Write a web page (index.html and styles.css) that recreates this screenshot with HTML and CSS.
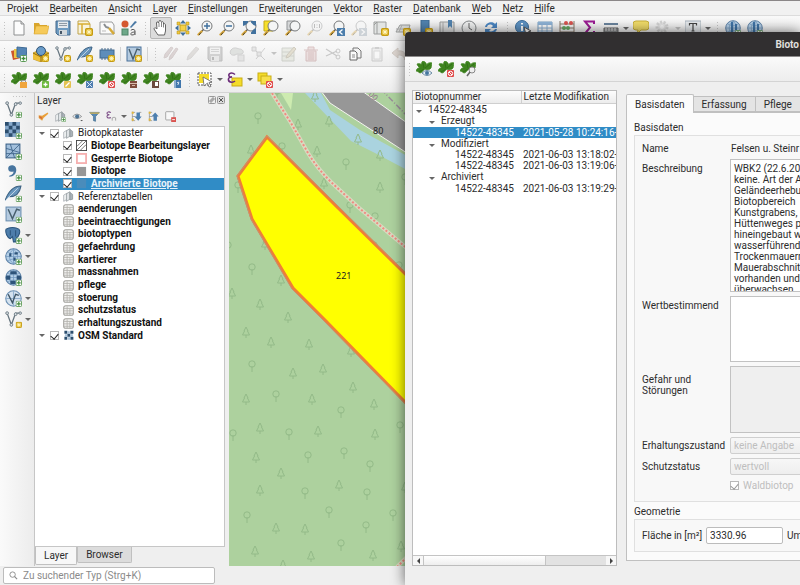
FILE: index.html
```html
<!DOCTYPE html>
<html lang="de">
<head>
<meta charset="utf-8">
<title>Biotopkataster</title>
<link rel="stylesheet" href="styles.css">
</head>
<body>
<svg class="defs" aria-hidden="true">
  <defs>
    <symbol id="b-plus" viewBox="0 0 7 7"><rect x=".5" y=".5" width="6" height="6" rx="1" fill="#fff" stroke="#5b9a55"/><path d="M3.500 1.500v4M1.500 3.500h4" stroke="#3f8a3a" stroke-width="1.300"/></symbol>
    <symbol id="b-star" viewBox="0 0 7 7"><rect x=".5" y=".5" width="6" height="6" rx="1" fill="#e8c33c" stroke="#c49a12"/><path d="M3.500 1.300v4.400M1.300 3.500h4.400M2 2l3 3M5 2l-3 3" stroke="#fff7c8" stroke-width=".8"/></symbol>
    <symbol id="b-no" viewBox="0 0 7 7"><rect width="7" height="7" rx="1" fill="#e04848"/><circle cx="3.500" cy="3.500" r="2.200" fill="none" stroke="#fff"/><path d="M2 2l3 3" stroke="#fff"/></symbol>
    <symbol id="leaf" viewBox="0 0 16 16"><path d="M8 8C5 5 5 1 7 0c3 1 4 3 3 5 1-3 4-4 6-3-1 2 0 5-2 6-2 1-4 1-5 0-2 1-3 4-5 4-2-1-2-2-4-2 1-3 3-4 6-3C4 7 2 6 1 3c3-1 5 0 6 3z" fill="#3f8420" stroke="#3f8420" stroke-width=".8"/><path d="M8 8L3 11M9 7l5-4M8 7L7 2" stroke="#2d6814" stroke-width=".7" fill="none"/></symbol>
    <symbol id="lens" viewBox="0 0 16 16"><circle cx="10" cy="6" r="5" fill="#f4f5f5" stroke="#77797a"/><path d="M6.500 9.500L4 12" stroke="#555" stroke-width="1.500"/><path d="M4.500 11.500L1.500 14.500" stroke="#d8a83e" stroke-width="2.400" stroke-linecap="round"/><path d="M4 12.500L2 15" stroke="#222" stroke-width=".8"/></symbol>
    <symbol id="vec" viewBox="0 0 16 16"><path d="M2 2l4 11 4-11h4" fill="none" stroke="#65747e" stroke-width="1.200"/><g fill="#dfe5e8" stroke="#65747e" stroke-width=".8"><circle cx="2" cy="2" r="1.300"/><circle cx="6" cy="13" r="1.300"/><circle cx="10" cy="3" r="1.300"/><circle cx="14.300" cy="2" r="1.200"/></g></symbol>
    <symbol id="feather" viewBox="0 0 16 16"><path d="M0 15C3 6 8 1 15 1c-1 6-5 10-11 10" fill="#6795bd" stroke="#3d6283"/><path d="M0 15L12 3" stroke="#d5e3ee" stroke-width=".8"/></symbol>
    <symbol id="globe" viewBox="0 0 16 16"><circle cx="8" cy="8" r="7.300" fill="#b4cfe7" stroke="#5f83a8"/><path d="M1 8h14M8 1v14M3 4c3 2 7 2 10 0M3 12c3-2 7-2 10 0M8 1C3 5 3 11 8 15M8 1c5 4 5 10 0 14" fill="none" stroke="#7299bf" stroke-width=".7"/></symbol>
    <symbol id="doc" viewBox="0 0 16 16"><path d="M3 1h7l3 3v11H3z" fill="#fcfcfc" stroke="#8d8f90"/><path d="M10 1v3h3" fill="#ddd" stroke="#8d8f90"/></symbol>
    <symbol id="disk" viewBox="0 0 16 16"><path d="M1 1h14v14H3l-2-2z" fill="#6d9ac0" stroke="#44698b"/><path d="M3 1.500h10V8H3z" fill="#e4e9ed"/><path d="M4 3.500h8M4 5.500h8" stroke="#8e9aa5"/><path d="M4 10h8v5H4z" fill="#d2d8dc"/><path d="M5 11h2v3H5z" fill="#456"/></symbol>
    <symbol id="pencil" viewBox="0 0 16 16"><path d="M2 14l1-4L11 1l3 2L6 12z" fill="#b9b3ae" stroke="#99938f" stroke-width=".8"/></symbol>
    <symbol id="grp" viewBox="0 0 16 16"><path d="M1 6l5-3v9l-5 3z" fill="#f1f3f4" stroke="#9aa1a6"/><path d="M5 4l5-3v11l-5 3z" fill="#dfe3e6" stroke="#8b9398"/><path d="M10 2l4 3v7l-4 1z" fill="#aab3b9" stroke="#858c90"/></symbol>
    <symbol id="tbl" viewBox="0 0 16 16"><rect x="1" y="1" width="14" height="14" rx="3" fill="#f2f2f0" stroke="#a3a29e" stroke-width="1.500"/><path d="M1 5h14M1 8.500h14M1 12h14M6 2v13M10 5v10" stroke="#b2b1ad" stroke-width="1.200"/></symbol>
    <symbol id="check" viewBox="0 0 16 16"><rect width="16" height="16" fill="#2c4e6e"/><path d="M4 0h4v4H4zM12 0h4v4h-4zM0 4h4v4H0zM8 4h4v4H8zM4 8h4v4H4zM12 8h4v4h-4zM0 12h4v4H0zM8 12h4v4H8z" fill="#86a9cb"/></symbol>
    <symbol id="osm" viewBox="0 0 16 16"><path d="M0 0h5v5H0zM10 0h5v5h-5zM5 5h5v5H5zM0 10h5v5H0zM10 10h5v5h-5z" fill="#2c4e6e"/><path d="M5 1h4v4H5zM1 6h4v4H1zM10 6h4v4h-4zM6 11h4v4H6z" fill="#a9c3dc"/></symbol>
    <symbol id="pine" viewBox="0 0 8 12"><path d="M4 1L6 5H5.500L7.500 9H.5L2.500 5H2zM4 9v3" fill="none" stroke="#93ba88"/></symbol>
    <symbol id="oak" viewBox="0 0 8 12"><circle cx="4" cy="4" r="3.200" fill="none" stroke="#93ba88"/><path d="M4 6v6" stroke="#93ba88"/></symbol>
  </defs>
</svg>

<nav class="menu">
  <a href="#">Pro<u>j</u>ekt</a><a href="#"><u>B</u>earbeiten</a><a href="#"><u>A</u>nsicht</a><a href="#"><u>L</u>ayer</a><a href="#"><u>E</u>instellungen</a><a href="#">Er<u>w</u>eiterungen</a><a href="#"><u>V</u>ektor</a><a href="#"><u>R</u>aster</a><a href="#"><u>D</u>atenbank</a><a href="#"><u>W</u>eb</a><a href="#"><u>N</u>etz</a><a href="#"><u>H</u>ilfe</a>
</nav>

<div class="bar">
  <i class="grip lead"></i>
  <button aria-label="Neu"><svg><use href="#doc"/></svg></button>
  <button aria-label="Öffnen"><svg viewBox="0 0 16 16"><path d="M1 14V3h5l1 2h7v9z" fill="#d9a52c"/><path d="M1 14L3 6h13l-2 8z" fill="#f6ca5a" stroke="#d9a52c" stroke-width=".6"/></svg></button>
  <button aria-label="Speichern"><svg><use href="#disk"/></svg></button>
  <button aria-label="Neues Layout"><svg viewBox="0 0 16 16"><path d="M1 1h10l2 3v10H1z" fill="#f8f3dc" stroke="#bfa34a"/><path d="M1 4h12M5 4v10" stroke="#d8ae33" stroke-width="1.500"/><use href="#b-star" x="8" y="8" width="8" height="8"/></svg></button>
  <button aria-label="Layouts"><svg viewBox="0 0 16 16"><path d="M1 2h12l2 3v9H1z" fill="#fafafa" stroke="#9a9c9d"/><path d="M5 4l2 3 3 1" fill="none" stroke="#8a8e91" stroke-width="2"/><path d="M10 8l5 6" stroke="#d5aa38" stroke-width="2.500"/><path d="M3 11h4" stroke="#bbb"/></svg></button>
  <button aria-label="Stile"><svg viewBox="0 0 16 16"><circle cx="4" cy="4" r="3.500" fill="#d4572f"/><path d="M9 7l5-6 2 1-6 6z" fill="#4b7aa5"/><rect x="1" y="9" width="6" height="6" fill="#6ea889" stroke="#4e8468"/><path d="M14 15V11c0-2-4-2-4-.5M14 12c-5 0-5 3-3 3q2 0 3-1.500" fill="none" stroke="#555"/></svg></button>
  <i class="grip"></i>
  <button class="on" aria-label="Verschieben"><svg viewBox="0 0 16 16"><path d="M5 15L1 9c0-1 1-2 3 0L3.500 3c0-1.500 1.500-1.500 2 0L6 1.500c0-1.500 2-1.500 2 0l.5 1c0-1.500 2-1 2 .5v1c1-1 2 0 2 1V11l-1 4z" fill="#fff" stroke="#555" stroke-width=".9"/><path d="M6 3v4M8.500 3v4M10.500 4v3.500" stroke="#666" stroke-width=".8"/></svg></button>
  <button aria-label="Auf Auswahl"><svg viewBox="0 0 16 16"><rect x="5" y="5" width="6" height="6" fill="#f5d24b" stroke="#c19f1e"/><path d="M8 0l3 3.500H5zM8 16l3-3.500H5zM0 8l3.500-3v6zM16 8l-3.500-3v6z" fill="#41719e"/><path d="M2 2h3v3H2zM11 2h3v3h-3zM2 11h3v3H2zM11 11h3v3h-3z" fill="#f0c83c" stroke="#b18d14" stroke-width=".5"/></svg></button>
  <button aria-label="Hineinzoomen"><svg viewBox="0 0 16 16"><use href="#lens"/><path d="M10 3v6M7 6h6" stroke="#41719e" stroke-width="1.500"/></svg></button>
  <button aria-label="Hinauszoomen"><svg viewBox="0 0 16 16"><use href="#lens"/><path d="M7 6h6" stroke="#41719e" stroke-width="1.500"/></svg></button>
  <button aria-label="Voll zoomen"><svg viewBox="0 0 16 16"><use href="#lens"/><path d="M2 1h5v1.500L4.500 5 2 6zM15 1h-5v1.500L12.500 5 15 6zM15 14h-5v-1.500l2.500-3L15 8z" fill="#41719e"/></svg></button>
  <button aria-label="Zur Auswahl zoomen"><svg viewBox="0 0 16 16"><path d="M1 1h9v10H1z" fill="#f7e02b" stroke="#c4a918"/><use href="#lens"/></svg></button>
  <button aria-label="Auf Layer zoomen"><svg viewBox="0 0 16 16"><path d="M2 1h8v9H2z" fill="#d5d7d8" stroke="#919496"/><use href="#lens"/></svg></button>
  <button class="off" aria-label="Auf native Auflösung"><svg viewBox="0 0 16 16"><use href="#lens"/><path d="M7.500 4v4M10 4.500v.8M10 7v.8M12.500 4v4" stroke="#555"/></svg></button>
  <button aria-label="Zoom zurück"><svg viewBox="0 0 16 16"><use href="#lens"/><rect x="8" y="8" width="8" height="8" fill="#4c7eac"/><path d="M13.500 9.500L10.500 12l3 2.500" fill="none" stroke="#fff" stroke-width="1.300"/></svg></button>
  <button class="off" aria-label="Zoom vor"><svg viewBox="0 0 16 16"><use href="#lens"/><rect x="8" y="8" width="8" height="8" fill="#8a9aa8"/><path d="M10.500 9.500l3 2.500-3 2.500" fill="none" stroke="#fff" stroke-width="1.300"/></svg></button>
  <button aria-label="Neue Kartenansicht"><svg viewBox="0 0 16 16"><path d="M1 2h12v12H1z" fill="#e2e4e3" stroke="#9b9d9c"/><path d="M4 2v12M1 5l3-3" stroke="#9b9d9c"/><use href="#b-star" x="8" y="8" width="8" height="8"/></svg></button>
  <button aria-label="Neue 3D-Ansicht"><svg viewBox="0 0 16 16"><path d="M1 12L5 5h10l-2 7z" fill="#d9dbd9" stroke="#9b9d9c"/><path d="M4 12l3-7M1 9h13" stroke="#aaa"/><use href="#b-star" x="8" y="8" width="8" height="8"/></svg></button>
  <button aria-label="Neues Lesezeichen"><svg viewBox="0 0 16 16"><path d="M4 0h8v14l-4-3-4 3z" fill="#5284b0" stroke="#3f6a92"/><use href="#b-star" x="8" y="8" width="8" height="8"/></svg></button>
  <button aria-label="Lesezeichen"><svg viewBox="0 0 16 16"><path d="M1 2h14v12H1z" fill="#e2e3e3" stroke="#9b9d9c"/><path d="M4 2v12" stroke="#aaa"/><path d="M9 0h4v8l-2-2-2 2z" fill="#5284b0"/></svg></button>
  <button aria-label="Zeitsteuerung"><svg viewBox="0 0 16 16"><circle cx="8" cy="8" r="7" fill="#f1f2f2" stroke="#84888a"/><path d="M8 3v5l3 2" fill="none" stroke="#666"/></svg></button>
  <button aria-label="Neu laden"><svg viewBox="0 0 16 16"><path d="M2 7c1-5 8-6 10-3l2-2v6H8l2-2C8 4 5 4 4 7zM14 9c-1 5-8 6-10 3l-2 2V9h6l-2 2c2 1 5 0 6-2z" fill="#4b87c4"/></svg></button>
  <i class="grip"></i>
  <button aria-label="Objekte abfragen"><svg viewBox="0 0 16 16"><circle cx="7" cy="7" r="6.500" fill="#5e93c4" stroke="#3e6f9c"/><path d="M7 6v5M7 3v1.500" stroke="#fff" stroke-width="2"/><path d="M9 7l7 4-3 1-2 3z" fill="#fff" stroke="#555"/></svg></button>
  <button aria-label="Attributtabelle"><svg viewBox="0 0 16 16"><path d="M1 2h14v13H1z" fill="#fff" stroke="#7ba0c2"/><path d="M1 2h14v3H1z" fill="#8fb4d8"/><path d="M1 8h14M1 11h14M5 2v13M10 5v10" stroke="#8fb4d8"/></svg></button>
  <button aria-label="Feldrechner"><svg viewBox="0 0 16 16"><path d="M1 1v15M15 1v15M1 4h14M1 8h14M1 12h14" stroke="#8b7a6a" fill="none"/><g fill="#d9534f"><circle cx="7" cy="3" r="2"/><circle cx="12" cy="3" r="2"/></g><g fill="#65a963"><circle cx="5" cy="8" r="2"/><circle cx="9" cy="8" r="2"/></g></svg></button>
  <button aria-label="Statistik"><svg viewBox="0 0 16 16"><path d="M13 4V1.500H4l5 6-5 6h9V11" fill="none" stroke="#9b1a93" stroke-width="2"/></svg></button>
  <button aria-label="Messen"><svg viewBox="0 0 16 16"><path d="M1 4h14" stroke="#3c5f80" stroke-width="1.500"/><path d="M1 8h14v6H1z" fill="#8e9193" stroke="#666"/><path d="M3 8v3M6 8v3M9 8v3M12 8v3" stroke="#ddd"/></svg></button>
  <i class="caret"></i>
  <button aria-label="Kartenhinweise"><svg viewBox="0 0 16 16"><path d="M3 1h10q3 0 3 3v3q0 3-3 3H8l-4 4 1-4H3q-3 0-3-3V4q0-3 3-3z" fill="#f2dd6a" stroke="#c9b13b"/></svg></button>
  <button class="off" aria-label="Aktionen"><svg viewBox="0 0 16 16"><circle cx="7" cy="7" r="5" fill="#ccc" stroke="#999" stroke-width="3" stroke-dasharray="2 1.500"/><circle cx="7" cy="7" r="2" fill="#fff"/></svg></button>
  <i class="caret off"></i>
  <button aria-label="Textbeschriftung"><svg viewBox="0 0 16 16"><rect x="0" y="1" width="16" height="12" fill="#e7ebee" stroke="#a9b4bd"/><path d="M4.500 5.500V3.500h7v2M8 3.500V11M6.500 11h3" fill="none" stroke="#444" stroke-width="1.200"/></svg></button>
  <i class="caret"></i>
  <i class="grip"></i>
  <button aria-label="Dienst laden"><svg viewBox="0 0 16 16"><use href="#globe"/><use href="#b-plus" x="10" y="10" width="6" height="6"/><path d="M6 2h2v11H6zM10 4h2v6h-2z" fill="#3f74a8"/></svg></button>
  <button aria-label="Dienst suchen"><svg viewBox="0 0 16 16"><use href="#globe"/><use href="#b-plus" x="10" y="10" width="6" height="6"/><path d="M6 2h2v11H6zM10 4h2v6h-2z" fill="#3f74a8"/></svg></button>
</div>

<div class="bar">
  <i class="grip lead"></i>
  <button aria-label="Datenquellen"><svg viewBox="0 0 16 16"><path d="M0 5l8-2 2 9-8 2z" fill="#cc552c"/><path d="M3 3h9v9H3z" fill="#edc544"/><path d="M6 1l10 1-1 10-9-1z" fill="#5585b5" stroke="#3f6a94"/><use href="#b-plus" x="9" y="9" width="7" height="7"/></svg></button>
  <button aria-label="GeoPackage"><svg viewBox="0 0 16 16"><path d="M0 7l8-4 8 4v6l-8 3-8-3z" fill="#e6b830" stroke="#a9831a" stroke-width=".6"/><circle cx="8" cy="5" r="4.500" fill="#6a9cc9" stroke="#2f5274"/><path d="M0 7l8 4 8-4v6l-8 3-8-3z" fill="#eec03a"/><path d="M0 7l8 4 8-4M8 11v5" fill="none" stroke="#8e6c12"/><use href="#b-star" x="9" y="9" width="7" height="7"/></svg></button>
  <button aria-label="Shapedatei"><svg viewBox="0 0 16 16"><use href="#vec"/><use href="#b-star" x="9" y="9" width="7" height="7"/></svg></button>
  <button aria-label="SpatiaLite"><svg viewBox="0 0 16 16"><use href="#feather"/><use href="#b-star" x="9" y="9" width="7" height="7"/></svg></button>
  <button aria-label="Temporärlayer"><svg viewBox="0 0 16 16"><path d="M3 2v12M6 2v12M9 2v12M12 2v12" stroke="#4c6e8e"/><rect x="1" y="4" width="14" height="8" fill="#5d8dba" stroke="#41688e"/><use href="#b-star" x="9" y="9" width="7" height="7"/></svg></button>
  <i class="rule"></i>
  <button aria-label="Virtueller Layer"><svg viewBox="0 0 16 16"><rect x="1" y="1" width="14" height="14" fill="#b5cbe0" stroke="#48719a"/><path d="M3 3l4 10 4-10 3 1" fill="none" stroke="#48606f" stroke-width="1.400"/><use href="#b-star" x="9" y="9" width="7" height="7"/></svg></button>
  <i class="rule"></i>
  <i class="grip"></i>
  <button class="off" aria-label="Aktuelle Änderungen"><svg viewBox="0 0 16 16"><path d="M1 12l1-4 6-7 2 1-6 9zM6 14l1-4 6-8 2 1-6 9z" fill="#b19a9a" stroke="#998484"/></svg></button>
  <button class="off" aria-label="Bearbeiten"><svg><use href="#pencil"/></svg></button>
  <button class="off gray" aria-label="Layer speichern"><svg><use href="#disk"/></svg></button>
  <button class="off" aria-label="Polygon"><svg viewBox="0 0 16 16"><path d="M2 4c3-4 7-1 9-1s5 3 2 5c-4 1-4-1-7 1-4 1-6-2-4-5z" fill="#b9beb9" stroke="#888"/><rect x="9" y="9" width="6" height="6" fill="#ccc" stroke="#999"/></svg></button>
  <button class="off" aria-label="Stützpunkte"><svg viewBox="0 0 16 16"><path d="M2 2l12 12M14 2L5 13" stroke="#888"/><path d="M1 1h4v4H1zM6 6h4v4H6z" fill="#ccc" stroke="#888"/></svg></button>
  <i class="caret off"></i>
  <button class="off" aria-label="Attribute ändern"><svg viewBox="0 0 16 16"><path d="M1 2h12v13H1z" fill="#d3d8c6" stroke="#8f9586"/><path d="M1 6h12M1 10h12" stroke="#8f9586"/><path d="M5 12l1-3 7-8 2 2-7 8z" fill="#c3b68d" stroke="#8b8062"/></svg></button>
  <button class="off" aria-label="Löschen"><svg viewBox="0 0 16 16"><path d="M1 4h14M5 4V1h6v3M3 5h10v10H3zM6 6v8M8 6v8M10 6v8" fill="#dcbaba" stroke="#a26464"/></svg></button>
  <button class="off" aria-label="Ausschneiden"><svg viewBox="0 0 16 16"><path d="M1 3l11 7M1 10l11-5" stroke="#777" stroke-width="1.300"/><circle cx="13" cy="5" r="2" fill="none" stroke="#777"/><circle cx="13" cy="11" r="2" fill="none" stroke="#777"/></svg></button>
  <button aria-label="Kopieren"><svg viewBox="0 0 16 16"><path d="M6 2h5l3 3v7H6z" fill="#f4f4f4" stroke="#777"/><path d="M3 5h5l2 2v7H3z" fill="#fafafa" stroke="#666"/><path d="M5 9h3M5 11h3" stroke="#888"/></svg></button>
  <button class="off" aria-label="Einfügen"><svg viewBox="0 0 16 16"><path d="M3 2h10v13H3z" fill="#ddd" stroke="#888"/><path d="M5 5h6v8H5z" fill="#fff" stroke="#aaa"/><path d="M6 1h4v2H6z" fill="#888"/></svg></button>
  <button class="off" aria-label="Rückgängig"><svg viewBox="0 0 16 16"><path d="M1 7l6-5v3c6-1 9 3 7 9-1-4-3-5-7-5v3z" fill="#b5a08f" stroke="#94806f"/></svg></button>
</div>

<div class="bar">
  <i class="grip lead"></i>
  <button aria-label="Gesperrt"><svg viewBox="0 0 16 16"><use href="#leaf"/><rect x="9" y="10" width="7" height="6" fill="#f0a53c"/><path d="M10.500 10V8.500h4V10" fill="none" stroke="#999"/></svg></button>
  <button aria-label="Neu anlegen"><svg viewBox="0 0 16 16"><use href="#leaf"/><rect x="9" y="9" width="7" height="7" rx="1" fill="#6cb83e"/><path d="M12.500 10.500v4M10.500 12.500h4" stroke="#fff" stroke-width="1.300"/></svg></button>
  <button aria-label="Ändern"><svg viewBox="0 0 16 16"><use href="#leaf"/><rect x="9" y="9" width="7" height="7" rx="1" fill="#e3c251"/><path d="M10.500 14.500l4-4" stroke="#fff" stroke-width="1.300"/></svg></button>
  <button aria-label="Teilen"><svg viewBox="0 0 16 16"><use href="#leaf"/><rect x="9" y="9" width="7" height="7" rx="1" fill="#4e7db0"/><path d="M10 10l5 5M15 10l-5 5" stroke="#dfe9f5"/></svg></button>
  <button aria-label="Verwerfen"><svg viewBox="0 0 16 16"><use href="#leaf"/><use href="#b-no" x="9" y="9" width="7" height="7"/></svg></button>
  <button aria-label="Archivieren"><svg viewBox="0 0 16 16"><use href="#leaf"/><rect x="9" y="9" width="7" height="7" fill="#7f4c3c"/><path d="M9 11.500h7M11 13.500h3" stroke="#d8b9ab"/></svg></button>
  <button aria-label="Protokoll"><svg viewBox="0 0 16 16"><use href="#leaf"/><rect x="9" y="9" width="7" height="7" fill="#6b4a3e"/><path d="M12 10h3v4h-3z" fill="#fff"/></svg></button>
  <button aria-label="Hilfe"><svg viewBox="0 0 16 16"><use href="#leaf"/><rect x="9" y="8" width="7" height="8" fill="#3f75ab"/><path d="M10 8v8" stroke="#dbe6f1"/><path d="M12 11q1.500-2 2 0l-1 1v1" fill="none" stroke="#fff" stroke-width=".8"/></svg></button>
  <i class="grip"></i>
  <button aria-label="Objekte wählen"><svg viewBox="0 0 16 16"><rect x="1" y="1" width="13" height="12" fill="#fff" stroke="#555" stroke-dasharray="2 1"/><path d="M2 2h10v9H2z" fill="#f4dc2a"/><path d="M6 5l9 5-3 .5 2 4-2 .5-1.500-4L7 14z" fill="#fff" stroke="#666" stroke-width=".8"/></svg></button>
  <i class="caret"></i>
  <button aria-label="Nach Ausdruck"><svg viewBox="0 0 16 16"><rect x="5" y="6" width="10" height="8" fill="#f4dc2a" stroke="#c9ae15"/><path d="M8 2.500C5 0 1 1 2 4q.5 1.500 3 1-4 0-3.500 3c.5 3 5 2.500 6.500 1" fill="none" stroke="#6b2c79" stroke-width="1.600"/></svg></button>
  <i class="caret"></i>
  <button aria-label="Auswahl aufheben"><svg viewBox="0 0 16 16"><rect x="1" y="1" width="9" height="8" fill="#f4dc2a" stroke="#c9ae15"/><rect x="4" y="4" width="10" height="8" fill="#f7e04a" stroke="#c9ae15"/><use href="#b-no" x="9" y="9" width="7" height="7"/></svg></button>
  <i class="caret"></i>
</div>

<main class="work">
  <div class="side">
    <i class="grip flat"></i>
    <div><button aria-label="Vektorlayer"><svg viewBox="0 0 16 16"><use href="#vec"/><use href="#b-plus" x="10" y="10" width="6" height="6"/></svg></button></div>
    <div><button aria-label="Rasterlayer"><svg viewBox="0 0 16 16"><use href="#check" width="14" height="14"/><use href="#b-plus" x="10" y="10" width="6" height="6"/></svg></button></div>
    <div><button aria-label="Netzlayer"><svg viewBox="0 0 16 16"><rect x="1" y="1" width="13" height="13" fill="#a3c0dc" stroke="#3c6288"/><path d="M1 5l13 4M5 1l4 13M1 14L14 1M1 10h13" stroke="#3c6288" stroke-width=".8" fill="none"/><use href="#b-plus" x="10" y="10" width="6" height="6"/></svg></button></div>
    <div><button aria-label="Textdatei"><svg viewBox="0 0 16 16"><path d="M4 11c3-1 4-2 4-4-3 1-5 0-5-3s5-4 7-1c2 4-1 9-6 9z" fill="#47759f"/><use href="#b-plus" x="10" y="10" width="6" height="6"/></svg></button></div>
    <div><button aria-label="SpatiaLite-Layer"><svg viewBox="0 0 16 16"><use href="#feather"/><use href="#b-plus" x="10" y="10" width="6" height="6"/></svg></button></div>
    <div><button aria-label="Virtueller Layer"><svg viewBox="0 0 16 16"><rect x="1" y="1" width="14" height="13" fill="#b5cbe0" stroke="#6b8eb0"/><path d="M3 3l4 9 4-9 3 1" fill="none" stroke="#48606f" stroke-width="1.400"/><use href="#b-plus" x="10" y="10" width="6" height="6"/></svg></button></div>
    <div><button aria-label="PostGIS"><svg viewBox="0 0 16 16"><path d="M1 2c3-2 9-2 12 0 2 2 0 7-2 8l-1 4H8L7 9 5 11C2 10 0 5 1 2z" fill="#4d7dab" stroke="#2c567e"/><path d="M5 3v5M10 3v6" stroke="#2c567e"/><use href="#b-plus" x="10" y="10" width="6" height="6"/></svg></button><i class="caret"></i></div>
    <div><button aria-label="WMS"><svg viewBox="0 0 16 16"><use href="#globe"/><path d="M4 5h2v3H4zM9 4h3v2H9zM8 9h2v3H8z" fill="#2d5379"/><use href="#b-plus" x="10" y="10" width="6" height="6"/></svg></button><i class="caret"></i></div>
    <div><button aria-label="WCS"><svg viewBox="0 0 16 16"><use href="#globe"/><path d="M5 2h6v3H5zM1 6h4v4H1zM11 6h4v4h-4zM5 11h5v3H5z" fill="#2d5379"/><use href="#b-plus" x="10" y="10" width="6" height="6"/></svg></button></div>
    <div><button aria-label="WFS"><svg viewBox="0 0 16 16"><circle cx="8" cy="8" r="7.300" fill="#d4e2ef" stroke="#6c90b3"/><path d="M1 8h14M8 1v14" stroke="#92b1cf"/><path d="M3 4l4 8 3-8 3 1" fill="none" stroke="#3e5465" stroke-width="1.300"/><use href="#b-plus" x="10" y="10" width="6" height="6"/></svg></button><i class="caret"></i></div>
    <div><button aria-label="Neuer Vektorlayer"><svg viewBox="0 0 16 16"><use href="#vec"/><use href="#b-star" x="10" y="10" width="6" height="6"/></svg></button><i class="caret"></i></div>
  </div>

  <section class="panel">
    <header>Layer<span class="wbtns"><button aria-label="Abdocken"><svg viewBox="0 0 8 8"><rect x=".5" y=".5" width="7" height="7" rx="1" fill="#eee" stroke="#999"/><path d="M2 4h2v2H2zM4 2h2v2H4z" fill="none" stroke="#777" stroke-width=".7"/></svg></button><button aria-label="Schließen"><svg viewBox="0 0 8 8"><rect x=".5" y=".5" width="7" height="7" rx="1" fill="#ddd" stroke="#999"/><path d="M2 2l4 4M6 2L2 6" stroke="#555"/></svg></button></span></header>
    <div class="tools">
      <button aria-label="Gestaltung"><svg viewBox="0 0 16 16"><path d="M1 6l5 1 8-5 1 2-7 6-2 4-5-4z" fill="#e9a03a"/><path d="M2 8l4 3" stroke="#d0663c" stroke-width="2"/></svg></button>
      <button aria-label="Gruppe"><svg viewBox="0 0 16 16"><use href="#grp"/><use href="#b-plus" x="9" y="9" width="7" height="7"/></svg></button>
      <button aria-label="Sichtbarkeit"><svg viewBox="0 0 16 16"><path d="M1 8q6-7 13 0-7 6-13 0z" fill="#e8edf1" stroke="#777"/><circle cx="7.500" cy="8" r="3" fill="#4d7394"/><path d="M12 13h4l-2 2z" fill="#555"/></svg></button>
      <button aria-label="Filter"><svg viewBox="0 0 16 16"><path d="M1 2h14L9.500 8v7l-3-1V8z" fill="#5688b6" stroke="#47718f"/><path d="M1 2h14v2H2z" fill="#d7b550"/></svg></button>
      <button aria-label="Ausdruck"><svg viewBox="0 0 16 16"><path d="M7 2.500C4 0 0 2 2 4.500q.5 1 3 1-4 0-3.500 3c.5 2.500 4 2 5.500 1" fill="none" stroke="#7a4a85" stroke-width="1.500"/><path d="M9 14v-4q3-2 5 0v4" fill="none" stroke="#888"/></svg></button>
      <i class="caret"></i>
      <button aria-label="Ausklappen"><svg viewBox="0 0 16 16"><path d="M2 1v14M2 2h4M2 8h4M2 14h4M12 2h3" stroke="#888" fill="none"/><path d="M1 1h3v3H1zM1 11h3v3H1z" fill="#e5b83a"/><path d="M8 2h5v6h2.500L10.500 14 5 8h3z" fill="#4d7fae"/></svg></button>
      <button aria-label="Einklappen"><svg viewBox="0 0 16 16"><path d="M2 1v14M2 2h4M2 8h4M2 14h4" stroke="#888" fill="none"/><path d="M1 1h3v3H1zM1 11h3v3H1z" fill="#e5b83a"/><path d="M8 14h5V8h2.500L10.500 2 5 8h3z" fill="#4d7fae"/></svg></button>
      <button aria-label="Entfernen"><svg viewBox="0 0 16 16"><rect x="1" y="1" width="12" height="12" rx="1" fill="#f8f8f8" stroke="#888"/><rect x="9" y="9" width="7" height="7" fill="#d9534f"/><path d="M10.500 12.500h4" stroke="#fff" stroke-width="1.300"/></svg></button>
    </div>
    <div class="treebox">
      <ul class="tree">
        <li><i class="caret"></i><input type="checkbox" checked id="l1"><svg><use href="#grp"/></svg><label for="l1">Biotopkataster</label></li>
        <li class="sub"><input type="checkbox" checked id="l2"><svg viewBox="0 0 12 12"><rect x=".5" y=".5" width="11" height="11" fill="#fff" stroke="#444"/><path d="M1 7l6-6M1 11L11 1M5 11l6-6" stroke="#444" stroke-width=".8"/></svg><label for="l2">Biotope Bearbeitungslayer</label></li>
        <li class="sub"><input type="checkbox" checked id="l3"><svg viewBox="0 0 12 12"><rect x="1" y="1" width="10" height="10" fill="#fff" stroke="#f6b0b0" stroke-width="2"/></svg><label for="l3">Gesperrte Biotope</label></li>
        <li class="sub"><input type="checkbox" checked id="l4"><svg viewBox="0 0 12 12"><rect x="1" y="1" width="10" height="10" fill="#979797"/></svg><label for="l4">Biotope</label></li>
        <li class="sub sel"><input type="checkbox" checked id="l5"><svg viewBox="0 0 12 12"><rect x="1" y="1" width="10" height="10" fill="#4a8cbb"/></svg><label for="l5">Archivierte Biotope</label></li>
        <li><i class="caret"></i><input type="checkbox" checked id="l6"><svg><use href="#grp"/></svg><label for="l6">Referenztabellen</label></li>
        <li class="tab"><svg><use href="#tbl"/></svg><b>aenderungen</b></li>
        <li class="tab"><svg><use href="#tbl"/></svg><b>beeintraechtigungen</b></li>
        <li class="tab"><svg><use href="#tbl"/></svg><b>biotoptypen</b></li>
        <li class="tab"><svg><use href="#tbl"/></svg><b>gefaehrdung</b></li>
        <li class="tab"><svg><use href="#tbl"/></svg><b>kartierer</b></li>
        <li class="tab"><svg><use href="#tbl"/></svg><b>massnahmen</b></li>
        <li class="tab"><svg><use href="#tbl"/></svg><b>pflege</b></li>
        <li class="tab"><svg><use href="#tbl"/></svg><b>stoerung</b></li>
        <li class="tab"><svg><use href="#tbl"/></svg><b>schutzstatus</b></li>
        <li class="tab"><svg><use href="#tbl"/></svg><b>erhaltungszustand</b></li>
        <li><i class="caret"></i><input type="checkbox" checked id="l7"><svg viewBox="-2 -1 18 18"><use href="#osm" width="16" height="16"/></svg><label for="l7"><b>OSM Standard</b></label></li>
      </ul>
    </div>
    <div class="dock"><button class="act">Layer</button><button>Browser</button></div>
  </section>

  <div class="map">
    <svg>
      <path d="M52 0h12l-2 17z" fill="#cdebb0"/>
      <path d="M76 0H92L101 17 131 37 180 64V78L146 60 122 48z" fill="#aad3df"/>
      <g>
        <use href="#pine" x="65" y="25" width="8" height="12"/><use href="#pine" x="96" y="22" width="8" height="12"/><use href="#pine" x="82" y="-3" width="8" height="12"/><use href="#pine" x="125" y="40" width="8" height="12"/><use href="#pine" x="84" y="52" width="8" height="12"/><use href="#pine" x="18" y="51" width="8" height="12"/><use href="#pine" x="147" y="56" width="8" height="12"/><use href="#pine" x="91" y="84" width="8" height="12"/><use href="#pine" x="147" y="88" width="8" height="12"/><use href="#pine" x="32" y="145" width="8" height="12"/><use href="#pine" x="48" y="181" width="8" height="12"/><use href="#pine" x="-1" y="194" width="8" height="12"/><use href="#pine" x="27" y="205" width="8" height="12"/><use href="#pine" x="55" y="218" width="8" height="12"/>
        <use href="#oak" x="25" y="19" width="8" height="12"/><use href="#oak" x="44" y="-6" width="8" height="12"/><use href="#oak" x="113" y="65" width="8" height="12"/><use href="#oak" x="49" y="49" width="8" height="12"/><use href="#oak" x="117" y="108" width="8" height="12"/><use href="#oak" x="142" y="119" width="8" height="12"/><use href="#oak" x="5" y="88" width="8" height="12"/><use href="#oak" x="-5" y="148" width="8" height="12"/><use href="#oak" x="19" y="170" width="8" height="12"/><use href="#oak" x="166" y="168" width="8" height="12"/><use href="#oak" x="172" y="80" width="8" height="12"/><use href="#oak" x="141" y="148" width="8" height="12"/>
        <use href="#pine" x="13" y="233" width="8" height="12"/><use href="#pine" x="38" y="243" width="8" height="12"/><use href="#pine" x="76" y="245" width="8" height="12"/><use href="#pine" x="118" y="252" width="8" height="12"/><use href="#pine" x="60" y="274" width="8" height="12"/><use href="#pine" x="90" y="270" width="8" height="12"/><use href="#pine" x="120" y="288" width="8" height="12"/><use href="#pine" x="13" y="300" width="8" height="12"/><use href="#pine" x="79" y="300" width="8" height="12"/><use href="#pine" x="141" y="305" width="8" height="12"/><use href="#pine" x="27" y="329" width="8" height="12"/><use href="#pine" x="85" y="332" width="8" height="12"/><use href="#pine" x="142" y="335" width="8" height="12"/><use href="#pine" x="23" y="358" width="8" height="12"/><use href="#pine" x="48" y="374" width="8" height="12"/><use href="#pine" x="27" y="391" width="8" height="12"/><use href="#pine" x="106" y="386" width="8" height="12"/><use href="#pine" x="172" y="388" width="8" height="12"/><use href="#pine" x="43" y="429" width="8" height="12"/><use href="#pine" x="72" y="430" width="8" height="12"/><use href="#pine" x="22" y="452" width="8" height="12"/><use href="#pine" x="78" y="457" width="8" height="12"/><use href="#pine" x="140" y="456" width="8" height="12"/><use href="#pine" x="50" y="466" width="8" height="12"/><use href="#pine" x="168" y="447" width="8" height="12"/>
        <use href="#oak" x="19" y="267" width="8" height="12"/><use href="#oak" x="43" y="297" width="8" height="12"/><use href="#oak" x="108" y="313" width="8" height="12"/><use href="#oak" x="167" y="328" width="8" height="12"/><use href="#oak" x="56" y="335" width="8" height="12"/><use href="#oak" x="0" y="336" width="8" height="12"/><use href="#oak" x="111" y="354" width="8" height="12"/><use href="#oak" x="75" y="358" width="8" height="12"/><use href="#oak" x="137" y="367" width="8" height="12"/><use href="#oak" x="72" y="394" width="8" height="12"/><use href="#oak" x="134" y="395" width="8" height="12"/><use href="#oak" x="96" y="413" width="8" height="12"/><use href="#oak" x="160" y="416" width="8" height="12"/><use href="#oak" x="14" y="418" width="8" height="12"/><use href="#oak" x="133" y="428" width="8" height="12"/><use href="#oak" x="108" y="446" width="8" height="12"/>
      </g>
      <path d="M92 -2L101 10 181 62V32L133 -2z" fill="#979797" stroke="#f4f4f0"/>
      <path d="M152 -4L180 25" stroke="#9a8d9a" stroke-width="1.500" stroke-dasharray="6 2 1 2" fill="none"/>
      <g fill="none"><path d="M43 0L62 30 79 60Q88 75 102 89L129 114 180 157M168 474l12-12" stroke="#e9dfcf" stroke-width="4" opacity=".7"/><path d="M43 0L62 30 79 60Q88 75 102 89L129 114 180 157M168 474l12-12" stroke="#f08a80" stroke-width="2" stroke-dasharray="2 2"/></g>
      <path d="M38 44L9 83 23 126 64 195 96 227 216 350V220L106 112z" fill="#ff0" stroke="#ef7f35" stroke-width="3"/>
      <path d="M38 43L8 83 22 126 63 196 95 228 216 351M38 43L107 111 216 219" fill="none" stroke="#c98b72"/>
      <text x="144" y="41">80</text><text x="107" y="186">221</text>
      <text x="139" y="2" class="road" transform="rotate(42 139 2)">00</text>
    </svg>
  </div>
</main>

<footer class="status">
  <label class="search"><svg viewBox="0 0 10 10"><circle cx="4" cy="4" r="3" fill="none" stroke="#8a8a8a"/><path d="M6 6l3 3" stroke="#8a8a8a" stroke-width="1.300"/></svg><input type="text" placeholder="Zu suchender Typ (Strg+K)" aria-label="Suche"></label>
</footer>

<section class="dialog">
  <h1>Bioto</h1>
  <div class="bar">
    <i class="grip lead"></i>
    <button aria-label="Ansehen"><svg viewBox="0 0 16 16"><use href="#leaf"/><path d="M6 12q5-5 10 0-5 5-10 0z" fill="#e8f0f6" stroke="#6b8ba4"/><circle cx="11" cy="12" r="2" fill="#47769f"/></svg></button>
    <button aria-label="Verwerfen"><svg viewBox="0 0 16 16"><use href="#leaf"/><use href="#b-no" x="9" y="9" width="7" height="7"/></svg></button>
    <button aria-label="Zoomen"><svg viewBox="0 0 16 16"><use href="#leaf"/><circle cx="12" cy="9" r="3" fill="#eee" stroke="#888"/><path d="M10 11l-3 4" stroke="#666" stroke-width="1.500"/></svg></button>
  </div>
  <div class="body">
    <div class="versions">
      <table>
        <thead><tr><th>Biotopnummer</th><th>Letzte Modifikation</th></tr></thead>
        <tbody>
          <tr><td colspan="2"><i class="caret"></i>14522-48345</td></tr>
          <tr><td colspan="2" class="d1"><i class="caret"></i>Erzeugt</td></tr>
          <tr class="sel"><td class="d2">14522-48345</td><td>2021-05-28 10:24:16-</td></tr>
          <tr><td colspan="2" class="d1"><i class="caret"></i>Modifiziert</td></tr>
          <tr><td class="d2">14522-48345</td><td>2021-06-03 13:18:02-</td></tr>
          <tr><td class="d2">14522-48345</td><td>2021-06-03 13:19:06-</td></tr>
          <tr><td colspan="2" class="d1"><i class="caret"></i>Archiviert</td></tr>
          <tr><td class="d2">14522-48345</td><td>2021-06-03 13:19:29-</td></tr>
        </tbody>
      </table>
      <div class="scroll"><button aria-label="Links"><i class="caret left"></i></button><span class="thumb"></span><span class="track"></span><button aria-label="Rechts"><i class="caret right"></i></button></div>
    </div>
    <div class="detail">
      <div class="tabs"><button class="act">Basisdaten</button><button>Erfassung</button><button>Pflege</button><i></i></div>
      <form class="page">
        <h2>Basisdaten</h2>
        <div class="group form">
          <span>Name</span><span class="name">Felsen u. Steinr</span>
          <label for="f1">Beschreibung</label><textarea id="f1" class="long" spellcheck="false">WBK2 (22.6.20
keine. Art der A
Geländeerhebu
Biotopbereich
Kunstgrabens,
Hüttenweges p
hineingebaut w
wasserführend
Trockenmauern
Mauerabschnit
vorhanden und
überwachsen, </textarea>
          <label for="f2">Wertbestimmend</label><textarea id="f2"></textarea>
          <label for="f3" class="multi">Gefahr und<br>Störungen</label><textarea id="f3" disabled></textarea>
          <label for="f4" class="mid">Erhaltungszustand</label><select id="f4" disabled><option>keine Angabe</option></select>
          <label for="f5" class="mid">Schutzstatus</label><select id="f5" disabled><option>wertvoll</option></select>
          <span></span><span class="wald"><input type="checkbox" id="f6" checked disabled><label for="f6">Waldbiotop</label></span>
        </div>
        <h2>Geometrie</h2>
        <div class="group geo"><label for="f7">Fläche in [m²]</label><input type="text" id="f7" value="3330.96"><span>Um</span></div>
      </form>
    </div>
  </div>
</section>
</body>
</html>
```
FILE: styles.css
```css
* { box-sizing: border-box; }
body {
  margin: 0;
  height: 100vh;
  display: flex;
  flex-direction: column;
  position: relative;
  overflow: hidden;
  background: #efefef;
  color: #2c2c2c;
  font: 10px/13px Roboto, "Noto Sans", sans-serif;
}
.defs { position: absolute; width: 0; height: 0; }
button, input, select, textarea { font: inherit; color: inherit; margin: 0; padding: 0; }
button { border: 0; background: none; }
svg { display: block; flex: none; }

.menu { display: flex; gap: 11px; padding: 1px 7px 0; height: 16px; border-top: 1px solid #8b8788; background: #f1f1f1; border-bottom: 1px solid #dcdcdc; }
.menu a { color: #2c2c2c; text-decoration: none; }

.bar { display: flex; align-items: center; height: 26px; flex: none; border-bottom: 1px solid #d4d4d4; background: linear-gradient(#fafafa, #ededed); }
.menu + .bar { height: 25px; }
.bar button { width: 22px; height: 22px; display: grid; place-items: center; flex: none; }
.bar svg { width: 16px; height: 16px; }
.bar .on { border: 1px solid #b5b5b5; border-radius: 2px; background: #dcdcdc; }
.off { opacity: .35; }
.gray { filter: grayscale(1); }
.grip { width: 10px; height: 14px; flex: none; background: radial-gradient(circle, #c4c4c4 35%, transparent 40%) 50% 0 / 3px 3px repeat-y; }
.grip.lead { width: 8px; }
.grip.flat { display: block; width: 14px; height: 4px; margin: 2px 0 0 9px; background: radial-gradient(circle, #c4c4c4 35%, transparent 40%) 0 0 / 3px 3px repeat-x; }
.rule { width: 5px; height: 14px; flex: none; background: linear-gradient(#d2d2d2, #d2d2d2) center / 1px 100% no-repeat; }
.caret { width: 8px; height: 8px; flex: none; display: inline-grid; place-items: center; }
.caret::before { content: ""; border: 3px solid transparent; border-top: 3px solid #666; border-bottom: 0; }
.caret.left::before { border: 3px solid transparent; border-right-color: #444; border-left: 0; }
.caret.right::before { border: 3px solid transparent; border-left-color: #444; border-right: 0; }

.work { flex: 1; min-height: 0; display: flex; }
.side { width: 35px; flex: none; padding-left: 3px; border-right: 1px solid #c6c6c6; background: linear-gradient(90deg, #fafafa, #ececec); }
.side div { display: flex; align-items: center; height: 21px; }
.side button { width: 21px; height: 21px; display: grid; place-items: center; }
.side svg { width: 17px; height: 17px; }

.panel { width: 190px; flex: none; display: flex; flex-direction: column; margin-right: 4px; }
.panel header { display: flex; justify-content: space-between; align-items: center; height: 14px; padding: 0 0 0 2px; }
.wbtns { display: flex; gap: 1px; }
.wbtns svg { width: 8px; height: 8px; }
.tools { display: flex; align-items: center; height: 19px; }
.tools button { width: 17px; height: 16px; display: grid; place-items: center; }
.tools svg { width: 11px; height: 11px; }
.treebox { flex: 1; border: 1px solid #c6c6c6; border-left: 0; background: #fff; }
.tree { margin: 0; padding: 0; list-style: none; display: grid; grid-template-rows: repeat(17, 1fr); height: 215px; color: #222; }
.tree li { display: flex; align-items: center; gap: 4px; padding-left: 3px; min-height: 0; line-height: 12px; white-space: nowrap; }
.tree li svg { width: 11px; height: 11px; }
.tree .sub { padding-left: 28px; font-weight: bold; color: #111; }
.tree .tab { padding-left: 28px; gap: 4px; }
.tree b { color: #111; }
.tree .sel { background: #308cc6; color: #e9f3fa; }
.tree .sel label { text-decoration: underline; }
input[type="checkbox"] { appearance: none; width: 9px; height: 9px; flex: none; border: 1px solid #b9b9b9; background: #fff; display: grid; place-items: center; }
input[type="checkbox"]:checked::before { content: ""; width: 4px; height: 6px; border: solid #222; border-width: 0 1px 1px 0; transform: rotate(40deg); }
.dock { display: flex; align-items: flex-start; height: 19px; }
.dock button { height: 16px; padding: 0 8px; border: 1px solid #c0c0c0; border-top: 0; background: #dcdcdc; border-radius: 0 0 2px 2px; }
.dock .act { height: 18px; background: #f7f7f7; }

.map { flex: 1; min-width: 0; background: #add19e; overflow: hidden; }
.map > svg { width: 100%; height: 100%; }
.map text { font-family: "Noto Sans", sans-serif; font-size: 9px; fill: #222; }
.map .road { fill: #94708f; font-size: 8px; }

.status { height: 19px; flex: none; padding: 1px 3px; }
.search { display: flex; align-items: center; width: 212px; height: 17px; padding: 0 5px; gap: 5px; border: 1px solid #bcbcbc; border-radius: 2px; background: #fff; }
.search svg { width: 9px; height: 9px; }
.search input { flex: 1; min-width: 0; border: 0; outline: 0; background: none; }
.search input::placeholder { color: #8a8a8a; }

.dialog { position: absolute; left: 405px; right: 0; top: 32px; bottom: 0; display: flex; flex-direction: column; background: #efefef; border-radius: 4px 0 0 0; box-shadow: 0 0 14px rgba(0, 0, 0, .6); overflow: hidden; }
.dialog h1 { margin: 0; height: 25px; padding-right: 1px; text-align: right; font-size: 10px; line-height: 25px; color: #e2e0de; background: #312f30; border-bottom: 1px solid #8d8b8b; }
.dialog .bar { height: 25px; }
.body { flex: 1; min-height: 0; display: flex; gap: 9px; padding: 8px 0 19px 7px; }
.versions { width: 205px; flex: none; display: flex; flex-direction: column; justify-content: space-between; border: 1px solid #bdbdbd; background: #fff; overflow: hidden; }
.versions table { width: 100%; table-layout: fixed; border-collapse: collapse; line-height: 11px; white-space: nowrap; }
.versions th { height: 12px; padding: 0 2px; text-align: left; font-weight: normal; border-bottom: 1px solid #cfcfcf; background: linear-gradient(#fdfdfd, #ececec); }
.versions th:first-child { width: 108px; border-right: 1px solid #cfcfcf; }
.versions td { padding: 0 0 0 2px; height: 11px; overflow: hidden; }
.versions td .caret { margin-right: 5px; }
.versions .d1 { padding-left: 15px; }
.versions .d2 { padding-left: 42px; }
.versions .sel { background: #308cc6; color: #fff; }
.scroll { display: flex; height: 10px; border-top: 1px solid #c4c4c4; background: #e2e2e2; }
.scroll button { width: 10px; display: grid; place-items: center; background: #f7f7f7; }
.thumb { flex: 2; background: linear-gradient(#fff, #eee); border: solid #c4c4c4; border-width: 0 1px; }
.track { flex: 1; }

.detail { flex: 1; min-width: 0; margin-right: -60px; display: flex; flex-direction: column; padding: 4px 0 7px; }
.tabs { display: flex; align-items: flex-end; height: 18px; }
.tabs > * { height: 16px; padding: 0 8px; border: 1px solid #c0c0c0; border-left: 0; background: #e4e4e4; }
.tabs .act { height: 19px; border-left: 1px solid #c0c0c0; border-bottom: 0; border-radius: 2px 2px 0 0; background: #fbfbfb; margin-bottom: -1px; position: relative; }
.tabs i { flex: 1; }
.page { flex: 1; padding: 8px 7px; border: 1px solid #c0c0c0; background: #fbfbfb; }
.page h2 { margin: 0; font: inherit; height: 14px; line-height: 14px; }
.group { border: 1px solid #e0e0e0; background: #f8f8f8; padding: 7px; }
.form { display: grid; grid-template-columns: 84px 1fr; column-gap: 4px; row-gap: 4px; line-height: 11px; height: 367px; grid-template-rows: 12px 133px 66px 67px 17px 17px 12px; }
.name { padding-left: 1px; }
.form > label { padding-top: 4px; }
.form > .multi { padding-top: 8px; }
.form > .mid { padding-top: 3px; }
textarea { width: 100%; height: 100%; padding: 3px; resize: none; border: 1px solid #c2c2c2; background: #fff; line-height: 11px; overflow: hidden; }
.long { white-space: pre; }
textarea:disabled { background: #efefef; }
select { appearance: none; width: 100%; height: 17px; padding: 0 3px; border: 1px solid #cfcfcf; border-radius: 2px; background: linear-gradient(#f7f7f7, #eee); }
select:disabled { color: #bebebe; opacity: 1; }
.wald { display: flex; align-items: center; gap: 4px; color: #bebebe; }
.wald input:checked::before { border-color: #999; }
.group.form + h2 { margin-top: 3px; }
.geo { display: flex; align-items: center; gap: 4px; height: 33px; }
.geo input { width: 77px; height: 17px; padding: 0 3px; border: 1px solid #bcbcbc; border-radius: 2px; background: #fff; }
```
